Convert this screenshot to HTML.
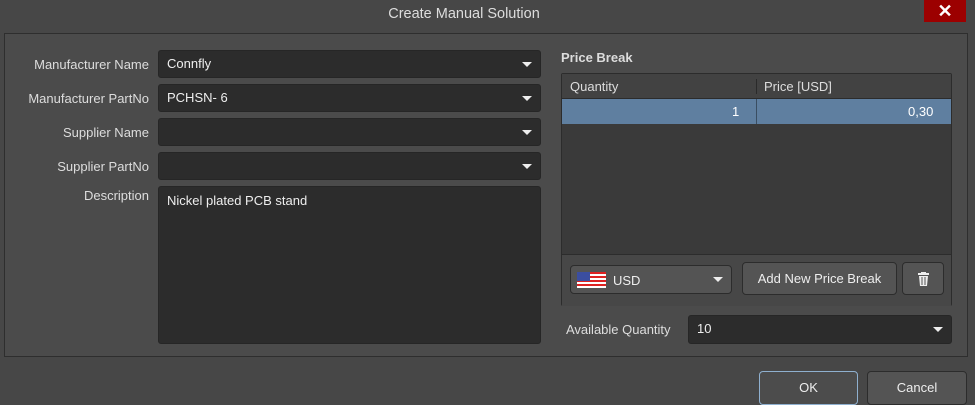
<!DOCTYPE html>
<html><head><style>
*{box-sizing:border-box;margin:0;padding:0}
body{width:975px;height:403px;background:#474747;font-family:"Liberation Sans",sans-serif;font-size:13px;color:#e6e6e6;position:relative;overflow:hidden}
.a{position:absolute}
.title{left:0;top:0;width:928px;height:33px;text-align:center;line-height:28px;font-size:14.5px;color:#ddd}
.close{left:924px;top:0;width:42px;height:22px;background:#9c0000;color:#fff;text-align:center;font-size:18px;line-height:22px;font-weight:bold}
.panel{left:4px;top:33px;width:964px;height:324px;border:1px solid #2e2e2e;background:#4b4b4b}
.lbl{text-align:right;width:145px;left:4px;color:#ddd}
.inp{background:#2c2c2c;border:1px solid #262626;border-radius:3px;padding-left:8px;line-height:26px;color:#eee}
.arr{position:absolute;right:8px;top:11px;width:0;height:0;border-left:5px solid transparent;border-right:5px solid transparent;border-top:5px solid #eee}
.btn{background:#545454;border:1px solid #2c2c2c;border-radius:4px;text-align:center;color:#eee}
</style></head><body>
<div class="a title">Create Manual Solution</div>
<div class="a close">✕</div>
<div class="a panel"></div>

<div class="a lbl" style="top:57px">Manufacturer Name</div>
<div class="a inp" style="left:158px;top:50px;width:383px;height:28px">Connfly<div class="arr"></div></div>
<div class="a lbl" style="top:91px">Manufacturer PartNo</div>
<div class="a inp" style="left:158px;top:84px;width:383px;height:28px">PCHSN- 6<div class="arr"></div></div>
<div class="a lbl" style="top:125px">Supplier Name</div>
<div class="a inp" style="left:158px;top:118px;width:383px;height:28px"><div class="arr"></div></div>
<div class="a lbl" style="top:159px">Supplier PartNo</div>
<div class="a inp" style="left:158px;top:152px;width:383px;height:28px"><div class="arr"></div></div>
<div class="a lbl" style="top:188px">Description</div>
<div class="a inp" style="left:158px;top:186px;width:383px;height:158px;line-height:28px">Nickel plated PCB stand</div>

<div class="a" style="left:561px;top:50px;font-weight:bold;color:#ddd">Price Break</div>
<div class="a" style="left:561px;top:73px;width:391px;height:233px;border:1px solid #2c2c2c;background:#3a3a3a;border-radius:2px">
 <div class="a" style="left:0;top:0;width:389px;height:25px;background:#424242;border-bottom:1px solid #2c2c2c"></div>
 <div class="a" style="left:8px;top:5px;color:#ddd">Quantity</div>
 <div class="a" style="left:194px;top:5px;width:1px;height:15px;background:#2a2a2a"></div>
 <div class="a" style="left:202px;top:5px;color:#ddd">Price [USD]</div>
 <div class="a" style="left:0;top:25px;width:389px;height:25px;background:#5f7fa0"></div>
 <div class="a" style="left:194px;top:25px;width:1px;height:25px;background:#3a4e62"></div>
 <div class="a" style="left:170px;top:30px;color:#fff">1</div>
 <div class="a" style="left:346px;top:30px;color:#fff">0,30</div>
 <div class="a" style="left:0;top:180px;width:389px;height:52px;background:#474747;border-top:1px solid #2c2c2c"></div>
</div>
<div class="a btn" style="left:570px;top:265px;width:162px;height:29px;text-align:left">
 <svg class="a" style="left:6px;top:6px" width="29" height="16" viewBox="0 0 29 16"><rect width="29" height="16" fill="#fff"/><g fill="#d22"><rect y="0" width="29" height="2"/><rect y="4" width="29" height="2"/><rect y="8" width="29" height="2"/><rect y="12" width="29" height="2"/></g><rect width="13" height="9" fill="#3b4ea0"/></svg>
 <div class="a" style="left:42px;top:7px">USD</div><div class="arr"></div></div>
<div class="a btn" style="left:742px;top:262px;width:155px;height:33px;line-height:31px">Add New Price Break</div>
<div class="a btn" style="left:902px;top:262px;width:42px;height:33px">
 <svg class="a" style="left:15px;top:9px" width="11" height="14" viewBox="0 0 11 14"><rect x="0" y="1" width="11" height="2" fill="#eee"/><rect x="3" y="0" width="5" height="2" fill="#eee"/><path d="M1 4h9l-1 10H2z" fill="#eee"/><path d="M4 5v8M7 5v8" stroke="#545454"/></svg></div>

<div class="a" style="left:566px;top:322px;color:#ddd">Available Quantity</div>
<div class="a inp" style="left:688px;top:315px;width:264px;height:29px">10<div class="arr"></div></div>

<div class="a btn" style="left:759px;top:371px;width:99px;height:34px;line-height:32px;border-color:#8fb0cf;background:#4c4c4c">OK</div>
<div class="a btn" style="left:867px;top:371px;width:100px;height:34px;line-height:32px">Cancel</div>
</body></html>
